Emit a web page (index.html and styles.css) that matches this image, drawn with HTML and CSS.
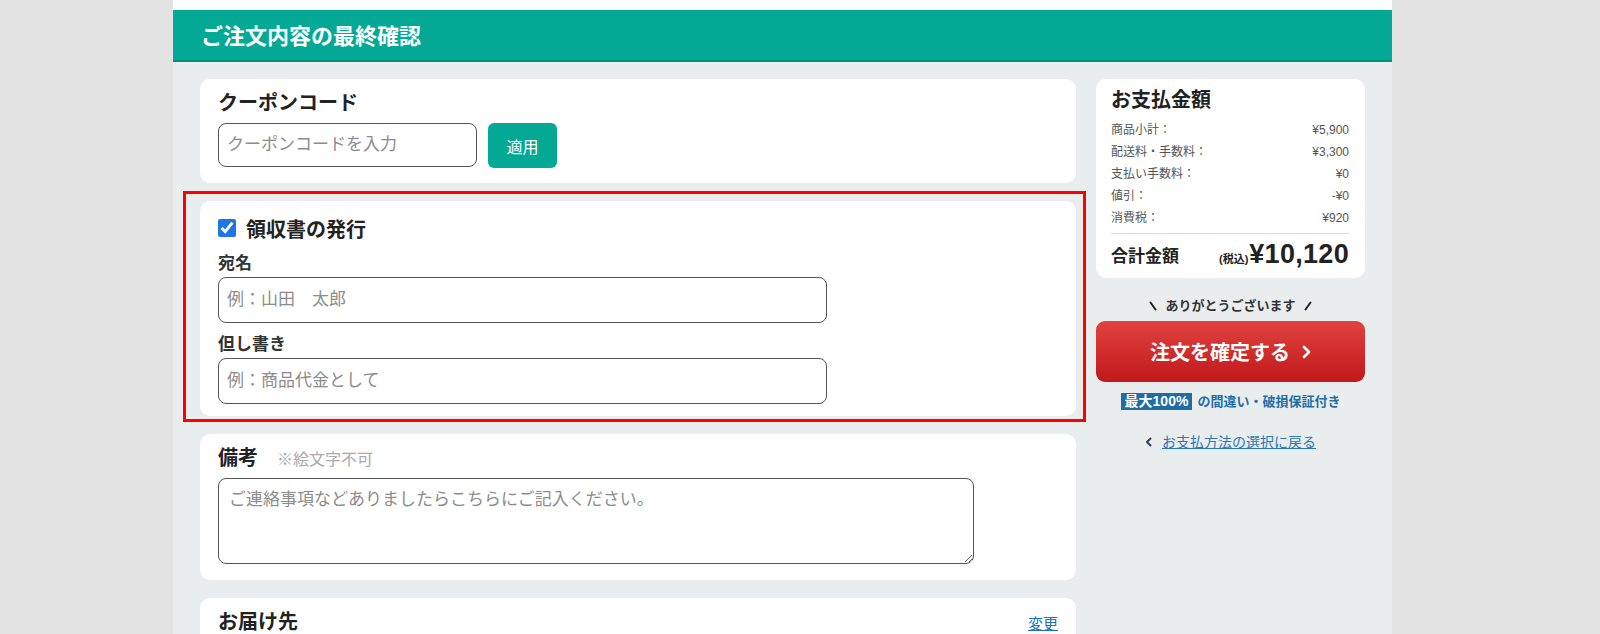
FILE: index.html
```html
<!DOCTYPE html>
<html lang="ja">
<head>
    <meta charset="UTF-8">
    <title>ご注文内容の最終確認</title>
    <link rel="stylesheet" href="styles.css">
</head>
<body>
    <div class="page">
        <header class="page-head">
            <h1>ご注文内容の最終確認</h1>
        </header>
        <div class="content">
            <div class="main">
                <section class="card coupon">
                    <h2 class="card-title">クーポンコード</h2>
                    <div class="coupon-row">
                        <input class="field coupon-field" type="text" placeholder="クーポンコードを入力">
                        <button class="apply-btn">適用</button>
                    </div>
                </section>

                <section class="card receipt">
                    <label class="check-title">
                        <input type="checkbox" checked>
                        <span>領収書の発行</span>
                    </label>
                    <span class="label">宛名</span>
                    <input class="field receipt-field" type="text" placeholder="例：山田　太郎">
                    <span class="label">但し書き</span>
                    <input class="field receipt-field" type="text" placeholder="例：商品代金として">
                </section>

                <section class="card note">
                    <h2 class="card-title note-title">備考<span class="note-sub">※絵文字不可</span></h2>
                    <textarea class="field note-field" placeholder="ご連絡事項などありましたらこちらにご記入ください。"></textarea>
                </section>

                <section class="card ship">
                    <div class="ship-head">
                        <h2 class="card-title">お届け先</h2>
                        <a class="change-link" href="#">変更</a>
                    </div>
                </section>
            </div>

            <aside class="side">
                <div class="card summary">
                    <h2 class="summary-title">お支払金額</h2>
                    <ul class="sum-list">
                        <li class="sum-row"><span>商品小計：</span><span>¥5,900</span></li>
                        <li class="sum-row"><span>配送料・手数料：</span><span>¥3,300</span></li>
                        <li class="sum-row"><span>支払い手数料：</span><span>¥0</span></li>
                        <li class="sum-row"><span>値引：</span><span>-¥0</span></li>
                        <li class="sum-row"><span>消費税：</span><span>¥920</span></li>
                    </ul>
                    <div class="sum-total">
                        <span class="total-label">合計金額</span>
                        <span class="total-val"><small>(税込)</small>¥10,120</span>
                    </div>
                </div>

                <p class="thanks">
                    <svg class="slash" width="8" height="10" viewBox="0 0 8 10"><line x1="1.5" y1="1.5" x2="6.5" y2="8.5" stroke="#222" stroke-width="2" stroke-linecap="round"/></svg>
                    ありがとうございます
                    <svg class="slash" width="8" height="10" viewBox="0 0 8 10"><line x1="6.5" y1="1.5" x2="1.5" y2="8.5" stroke="#222" stroke-width="2" stroke-linecap="round"/></svg>
                </p>

                <button class="order-btn">
                    注文を確定する
                    <svg width="9" height="14" viewBox="0 0 9 14"><polyline points="2,2 7,7 2,12" fill="none" stroke="#fff" stroke-width="2.6" stroke-linecap="round" stroke-linejoin="round"/></svg>
                </button>

                <p class="guarantee"><span class="badge">最大100%</span>の間違い・破損保証付き</p>

                <p class="back">
                    <svg width="7" height="10" viewBox="0 0 7 10"><polyline points="5.5,1.5 2,5 5.5,8.5" fill="none" stroke="#2b3f55" stroke-width="2" stroke-linecap="round" stroke-linejoin="round"/></svg>
                    <a href="#">お支払方法の選択に戻る</a>
                </p>
            </aside>
        </div>
    </div>
</body>
</html>
```

FILE: styles.css
```css
*{box-sizing:border-box;margin:0;padding:0}
ul{list-style:none}
body{background:#e3e3e3;font-family:"Liberation Sans","Noto Sans CJK JP",sans-serif;color:#333}
.page{width:1219px;min-height:100vh;margin-left:173px;background:#e9eded;border-top:10px solid #fff}
.page-head{height:52px;padding:3px 0 0 28px;display:flex;align-items:center;background:#04a995;border-bottom:2px solid #068f7e}
.page-head h1{color:#fff;font-size:22px;font-weight:bold;line-height:28px}
.content{display:flex;gap:20px;padding:17px 27px 0}
.main{width:876px;display:flex;flex-direction:column;gap:18px}
.side{width:269px;display:flex;flex-direction:column}
.card{background:#fff;border-radius:10px;padding:12px 18px 15px}
.card-title{font-size:20px;font-weight:bold;line-height:24px;color:#222}

/* inputs */
.field{display:block;border:1.5px solid #555;border-radius:8px;height:44px;padding:0 8px;font-size:17px;font-family:inherit;color:#333;background:#fff}
.field::placeholder{color:#8c8c8c}
.coupon-row{display:flex;gap:11px;margin-top:8px}
.coupon-field{width:259px}
.apply-btn{width:69px;height:45px;border:0;border-radius:6px;background:#04a995;color:#fff;font-size:16px;font-family:inherit}

/* receipt */
.receipt{position:relative;padding:13px 18px 12px}
.receipt::after{content:"";position:absolute;top:-10px;left:-17px;right:-10px;bottom:-6px;border:3px solid #f00;pointer-events:none}
.check-title{display:flex;align-items:center;gap:10px;height:28px;font-size:20px;font-weight:bold;color:#222}
.check-title input{width:18px;height:18px;margin:0;accent-color:#1e78e4}
.label{display:block;margin-top:10px;font-size:17px;font-weight:bold;line-height:24px;color:#333}
.receipt-field{width:609px;height:46px;margin-top:1px}

/* note */
.note{padding-bottom:16px}
.note-title{display:flex;align-items:baseline;gap:19px}
.note-sub{font-size:16px;font-weight:normal;color:#aaa}
.note-field{width:756px;height:86px;margin-top:6px;padding:8px 10px;resize:vertical;line-height:26px}

/* ship */
.ship{min-height:90px}
.ship-head{display:flex;justify-content:space-between;align-items:center}
.change-link{font-size:15px;color:#1d6fc0}

/* summary */
.summary{padding:9px 16px 3px 15px}
.summary-title{font-size:20px;font-weight:bold;line-height:24px;color:#222}
.sum-list{margin-top:7px}
.sum-row{display:flex;justify-content:space-between;font-size:12px;line-height:22px;color:#555}
.sum-total{display:flex;justify-content:space-between;align-items:center;margin-top:4px;padding-top:4px;line-height:32px;border-top:1px solid #ddd}
.total-label{font-size:17px;font-weight:bold;color:#222}
.total-val{font-size:27px;font-weight:bold;color:#222;letter-spacing:.3px}
.total-val small{font-size:11px;margin-right:1px;letter-spacing:0}

.thanks{display:flex;justify-content:center;align-items:center;gap:8px;margin-top:20px;font-size:13px;font-weight:bold;line-height:16px;color:#333}
.order-btn{display:flex;justify-content:center;align-items:center;gap:12px;height:61px;margin-top:7px;border:0;border-radius:9px;background:linear-gradient(#e1433f,#c0181b);color:#fff;font-size:20px;font-weight:bold;font-family:inherit}
.guarantee{margin-top:10px;text-align:center;font-size:13px;font-weight:bold;line-height:20px;color:#1f6ea8}
.badge{display:inline-block;margin-right:5px;padding:0 4px;background:#1f6da5;color:#fff;font-size:14px;line-height:17px}
.back{margin-top:20px;text-align:center;font-size:14px;line-height:20px}
.back svg{margin-right:6px}
.back a{color:#2a78b4}
```
